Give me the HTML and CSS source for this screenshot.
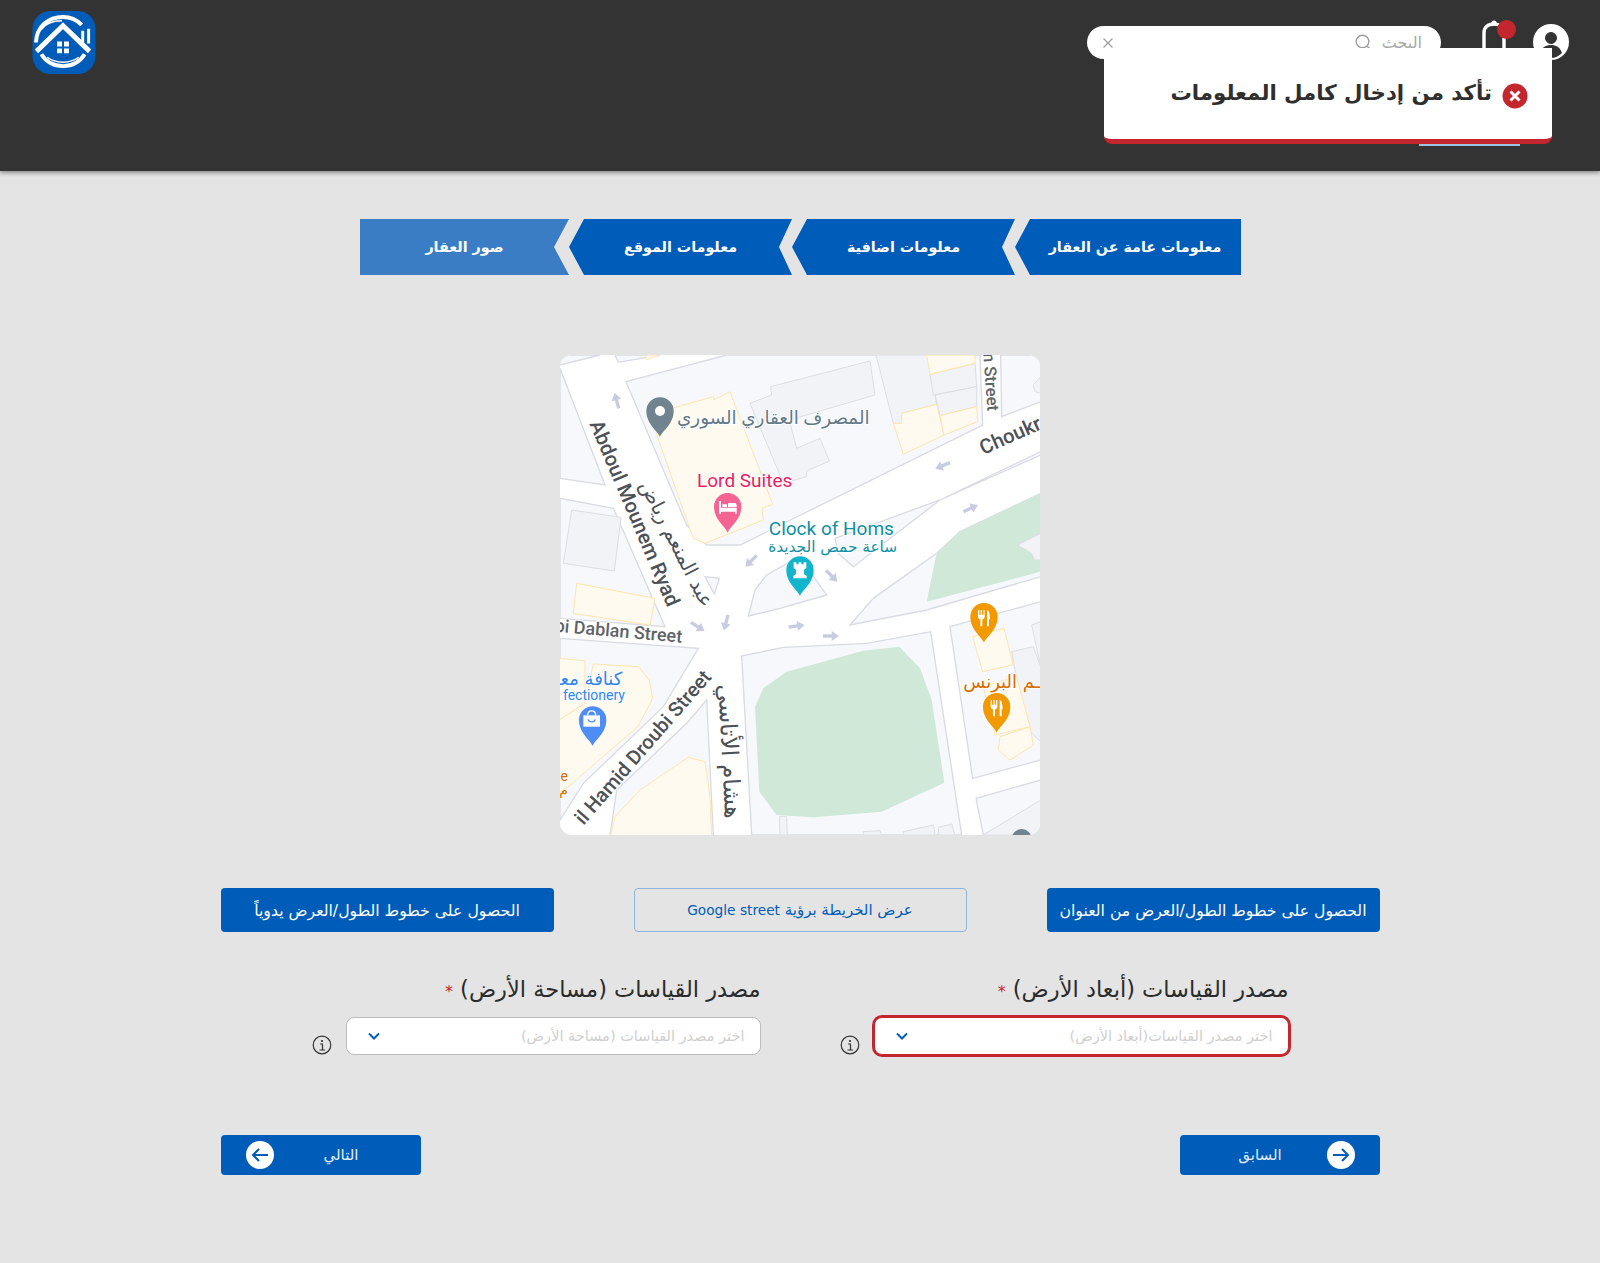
FILE: index.html
```html
<!DOCTYPE html>
<html lang="ar" dir="rtl">
<head>
  <meta charset="UTF-8">
  <meta name="viewport" content="width=device-width, initial-scale=1.0">
  <title>معلومات الموقع</title>
  <link rel="stylesheet" href="styles.css">
</head>
<body>
  <header class="top-bar">
    <div class="top-right">
      <div class="top-row">
        <svg class="user-icon" viewBox="0 0 36 36">
          <circle cx="18" cy="18" r="18" fill="#fff"/>
          <circle cx="18" cy="14" r="5.5" fill="#333" stroke="#333" stroke-width="1"/>
          <path d="M7 29c2-6 6-8 11-8s9 2 11 8c-3 3-7 5-11 5s-8-2-11-5z" fill="#333"/>
        </svg>
        <div class="bell">
          <svg viewBox="0 0 24 30" width="24" height="30">
            <path d="M2 30V13C2 7 6 4 12 4s10 3 10 9v17" fill="none" stroke="#fff" stroke-width="3.4"/>
            <circle cx="12" cy="3" r="2.6" fill="#fff"/>
          </svg>
          <span class="bell-dot"></span>
        </div>
        <div class="search-box">
          <span class="search-text">البحث</span>
          <svg class="search-icon" viewBox="0 0 18 18" width="18" height="18">
            <circle cx="8.5" cy="7.5" r="6.3" fill="none" stroke="#9d9d9d" stroke-width="1.4"/>
            <path d="M13 12l3 3" stroke="#9d9d9d" stroke-width="1.4"/>
          </svg>
          <svg class="search-clear" viewBox="0 0 12 12" width="12" height="12">
            <path d="M1.5 1.5l9 9M10.5 1.5l-9 9" stroke="#9d9d9d" stroke-width="1.2"/>
          </svg>
        </div>
      </div>
      <div class="nav-line"></div>
    </div>
    <svg class="logo" viewBox="0 0 64 64">
      <rect width="64" height="64" rx="18" fill="#005cb9"/>
      <g fill="none" stroke="#fff">
        <path d="M3.5 32C4 16 16 6 31 6c8 0 14 3 19 8" stroke-width="4"/>
        <path d="M9 44c5 8 13 12 22 12s17-4 22-12" stroke-width="4"/>
        <path d="M15 47c4 3 10 5 16 5s12-2 16-5" stroke-width="1.5"/>
        <path d="M9 19C13 13 21 10 30 10" stroke-width="1.5"/>
        <path d="M4 41L31 15l27 26" stroke-width="5"/>
        <path d="M51 20v12M57 18v15" stroke-width="3"/>
      </g>
      <path d="M25 31h5v5h-5zM32 31h5v5h-5zM25 38h5v5h-5zM32 38h5v5h-5z" fill="#fff"/>
    </svg>
  </header>

  <div class="toast">
    <svg class="toast-icon" viewBox="0 0 26 26" width="26" height="26">
      <circle cx="13" cy="13" r="12.5" fill="#c4262e"/>
      <path d="M8.5 8.5l9 9M17.5 8.5l-9 9" stroke="#fff" stroke-width="3"/>
    </svg>
    <span>تأكد من إدخال كامل المعلومات</span>
  </div>

  <main class="content">
    <div class="steps">
      <div class="step step-first">معلومات عامة عن العقار</div>
      <div class="step">معلومات اضافية</div>
      <div class="step">معلومات الموقع</div>
      <div class="step step-last">صور العقار</div>
    </div>

    <div class="map-box">
      <svg class="map" viewBox="30 30 1440 1440" width="480" height="480">
        <defs>
          <path id="arrow" d="M-24-5H2V-15L24 0 2 15V5H-24z" fill="#c9cce0"/>
          <path id="pin" d="M0 78C-6 60-41 40-41 0A41 41 0 0 1 41 0C41 40 6 60 0 78z"/>
          <path id="cutlery" d="M1285 795h4v14h4v-14h4v14h4v-14h4v20c0 5-4 8-7 8v21h-6v-21c-3 0-7-3-7-8zM1312 795c7 2 9 14 9 28h-3v21h-6z" fill="#fff"/>
        </defs>
        <rect x="30" y="30" width="1440" height="1440" fill="#fff"/>

        <!-- blocks -->
        <g class="block">
          <polygon points="228,110 530,30 1290,30 1298,240 570,600 470,600 410,540"/>
          <polygon points="30,30 30,60 150,30"/>
          <polygon points="195,30 205,52 330,30"/>
          <polygon points="1352,30 1355,215 1472,170 1472,30"/>
          <polygon points="30,70 165,420 30,400"/>
          <polygon points="30,460 190,490 345,845 30,820"/>
          <polygon points="465,695 508,700 493,747"/>
          <polygon points="595,813 615,735 650,690 720,650 780,680 830,750 690,790"/>
          <polygon points="910,665 865,625 855,580 1170,465 1420,345 1472,320 1472,330 1170,465"/>
          <polygon points="900,840 970,760 1160,625 1230,560 1472,445 1472,695 1130,795"/>
          <polygon points="30,880 445,910 340,1085 100,1315 30,1425"/>
          <polygon points="470,1065 490,1470 180,1470 200,1335 410,1135"/>
          <polygon points="575,933 700,907 950,895 1142,860 1235,1470 605,1470"/>
          <polygon points="1200,845 1472,770 1472,1245 1268,1300"/>
          <polygon points="1278,1360 1472,1305 1472,1470 1300,1470"/>
        </g>

        <!-- buildings -->
        <g class="building">
          <polygon points="600,175 665,150 662,125 960,48 975,150 718,225 740,310 810,280 838,348 770,378 770,395 700,415"/>
          <polygon points="978,30 1030,235 1055,235 1055,205 1160,178 1135,30"/>
          <polygon points="1140,88 1275,55 1280,125 1150,150"/>
          <polygon points="1155,150 1280,125 1280,185 1170,212"/>
          <polygon points="65,495 213,517 193,678 40,655"/>
          <polygon points="1450,120 1472,95 1472,145 1455,140"/>
          <polygon points="688,1415 710,1415 712,1470 690,1470"/>
          <polygon points="940,1460 990,1457 995,1470 940,1470"/>
          <polygon points="1060,1470 1060,1460 1150,1440 1155,1470"/>
          <polygon points="1165,1447 1205,1437 1215,1470 1165,1470"/>
          <polygon points="1385,920 1450,905 1472,965 1472,1190 1440,1160 1400,1000"/>
          <polygon points="1445,840 1472,830 1472,955 1470,955"/>
          <polygon points="1300,1470 1472,1365 1472,1470"/>
        </g>

        <!-- yellow lots -->
        <g class="lot">
          <polygon points="320,270 330,200 490,155 492,165 540,140 668,478 636,490 640,525 465,595 430,580"/>
          <polygon points="1055,205 1160,178 1182,270 1060,328 1030,235 1055,235"/>
          <polygon points="1130,30 1275,30 1275,55 1140,88"/>
          <polygon points="1170,212 1280,185 1283,230 1182,270"/>
          <polygon points="285,30 325,30 290,45"/>
          <polygon points="80,715 315,760 300,840 70,805"/>
          <polygon points="20,940 105,947 105,1075 20,1130"/>
          <polygon points="130,957 265,965 298,1005 308,1060 265,1143 55,1325 20,1345 20,1130 105,1075"/>
          <polygon points="180,1480 195,1415 270,1335 415,1237 465,1250 480,1355 485,1480"/>
          <polygon points="1268,875 1362,850 1390,960 1298,980"/>
          <polygon points="1300,1025 1400,995 1440,1145 1335,1170"/>
          <polygon points="1350,1175 1440,1145 1450,1200 1380,1245 1345,1215"/>
        </g>

        <!-- park -->
        <g class="park">
          <polygon points="615,1085 640,1030 710,980 940,917 1048,905 1110,970 1145,1065 1183,1313 995,1400 790,1417 680,1410 628,1340"/>
          <polygon points="1130,770 1160,625 1230,560 1472,445 1472,680"/>
        </g>
        <polygon class="building-flat" points="1402,600 1472,565 1472,645 1452,645 1445,625"/>

        <use href="#arrow" transform="translate(200,167) rotate(-105)"/>
        <use href="#arrow" transform="translate(1178,362) rotate(158)"/>
        <use href="#arrow" transform="translate(1262,490) rotate(-25)"/>
        <use href="#arrow" transform="translate(603,648) rotate(135)"/>
        <use href="#arrow" transform="translate(845,693) rotate(45)"/>
        <use href="#arrow" transform="translate(443,845) rotate(32)"/>
        <use href="#arrow" transform="translate(528,833) rotate(105)"/>
        <use href="#arrow" transform="translate(740,843) rotate(-8)"/>
        <use href="#arrow" transform="translate(843,873) rotate(0)"/>

        <!-- street names -->
        <text class="street" transform="translate(118,236) rotate(67)">Abdoul Mounem Ryad</text>
        <text class="street-ar" text-anchor="middle" transform="translate(362,605) rotate(63)">عبد المنعم رياض</text>
        <text class="street" transform="translate(1300,330) rotate(-24)">Choukr</text>
        <text class="street-small" transform="translate(1300,25) rotate(86)">n Street</text>
        <text class="street-thin" text-anchor="end" transform="translate(395,893) rotate(5)">bi Dablan Street</text>
        <text class="street-ar street-ar-big" text-anchor="middle" transform="translate(515,1220) rotate(87)">هشام الأتاسي</text>
        <text class="street street-big" text-anchor="end" transform="translate(487,998) rotate(-49)">il Hamid Droubi Street</text>

        <!-- places -->
        <use href="#pin" transform="translate(330,198)" fill="#70838f"/>
        <circle cx="330" cy="198" r="15" fill="#fff"/>
        <text class="place place-bank" x="670" y="236" text-anchor="middle">المصرف العقاري السوري</text>

        <text class="place place-hotel" x="584" y="425" text-anchor="middle">Lord Suites</text>
        <use href="#pin" transform="translate(533,485)" fill="#f46391"/>
        <path d="M507 468h6v20h47v18h-5v-6h-42v6h-6zM517 478h14v8h-14zM534 474h20c4 0 6 3 6 7v5h-26z" fill="#fff"/>

        <text class="place place-clock" x="844" y="570" text-anchor="middle">Clock of Homs</text>
        <text class="place-ar-small place-clock" x="848" y="620" text-anchor="middle">ساعة حمص الجديدة</text>
        <use href="#pin" transform="translate(750,675)" fill="#12b5cb"/>
        <path d="M731 653h8v6h7v-6h8v6h7v-6h8v17l-7 5v13l8 6v7h-40v-7l8-6v-13l-7-5z" fill="#fff" transform="translate(0,-1)"/>

        <use href="#pin" transform="translate(1302,815)" fill="#f29900"/>
        <use href="#cutlery" transform="translate(-1,0)"/>
        <use href="#pin" transform="translate(1340,1085)" fill="#f29900"/>
        <use href="#cutlery" transform="translate(37,270)"/>
        <text class="place-ar place-food" x="1470" y="1030" text-anchor="end">ـم البرنس</text>

        <use href="#pin" transform="translate(128,1125)" fill="#4e8df5"/>
        <path d="M100 1111h50v34h-50z" fill="#fff"/>
        <path d="M113 1111c0-18 24-18 24 0" fill="none" stroke="#fff" stroke-width="4"/>
        <path d="M114 1123c3 10 19 10 22 0" fill="none" stroke="#4e8df5" stroke-width="4"/>
        <text class="place-ar place-shop" x="217" y="1020" text-anchor="end">كنافة معـ</text>
        <text class="place-small place-shop" x="225" y="1066" text-anchor="end">fectionery</text>
        <text class="place-small place-food" x="54" y="1308" text-anchor="end">e</text>
        <text class="place-small place-food" x="54" y="1350" text-anchor="end">م</text>
        <circle cx="1415" cy="1482" r="30" fill="#70838f"/>
      </svg>
    </div>

    <div class="map-actions">
      <button class="btn btn-solid">الحصول على خطوط الطول/العرض من العنوان</button>
      <button class="btn btn-outline">عرض الخريطة برؤية <span class="btn-latin">Google street</span></button>
      <button class="btn btn-solid">الحصول على خطوط الطول/العرض يدوياً</button>
    </div>

    <div class="fields">
      <div class="field">
        <label class="field-label">مصدر القياسات (أبعاد الأرض) <span class="req">*</span></label>
        <div class="field-row">
          <div class="select select-error">
            <span>اختر مصدر القياسات(أبعاد الأرض)</span>
            <svg viewBox="0 0 12 8" width="12" height="8"><path d="M1 1.5l5 5 5-5" fill="none" stroke="#005cb9" stroke-width="2"/></svg>
          </div>
          <svg class="info" viewBox="0 0 20 20" width="20" height="20">
            <circle cx="10" cy="10" r="8.8" fill="none" stroke="#333" stroke-width="1.2"/>
            <circle cx="10" cy="6" r="1.1" fill="#333"/>
            <path d="M8 9h2.5v6M7.5 15h5.5" fill="none" stroke="#333" stroke-width="1.2"/>
          </svg>
        </div>
      </div>
      <div class="field">
        <label class="field-label">مصدر القياسات (مساحة الأرض) <span class="req">*</span></label>
        <div class="field-row">
          <div class="select">
            <span>اختر مصدر القياسات (مساحة الأرض)</span>
            <svg viewBox="0 0 12 8" width="12" height="8"><path d="M1 1.5l5 5 5-5" fill="none" stroke="#005cb9" stroke-width="2"/></svg>
          </div>
          <svg class="info" viewBox="0 0 20 20" width="20" height="20">
            <circle cx="10" cy="10" r="8.8" fill="none" stroke="#333" stroke-width="1.2"/>
            <circle cx="10" cy="6" r="1.1" fill="#333"/>
            <path d="M8 9h2.5v6M7.5 15h5.5" fill="none" stroke="#333" stroke-width="1.2"/>
          </svg>
        </div>
      </div>
    </div>

    <div class="pager">
      <button class="pager-btn pager-prev">
        <svg viewBox="0 0 28 28" width="28" height="28">
          <circle cx="14" cy="14" r="14" fill="#fff"/>
          <path d="M6 14h15M15 8l6 6-6 6" fill="none" stroke="#005cb9" stroke-width="2"/>
        </svg>
        <span>السابق</span>
      </button>
      <button class="pager-btn pager-next">
        <span>التالي</span>
        <svg viewBox="0 0 28 28" width="28" height="28">
          <circle cx="14" cy="14" r="14" fill="#fff"/>
          <path d="M22 14H7M13 8l-6 6 6 6" fill="none" stroke="#005cb9" stroke-width="2"/>
        </svg>
      </button>
    </div>
  </main>
</body>
</html>
```

FILE: styles.css
```css
* {
  box-sizing: border-box;
}
body {
  margin: 0;
  min-height: 1263px;
  background-color: #e4e4e4;
  font-family: "DejaVu Sans", sans-serif;
  color: #2b2b2b;
}

/* top bar */
.top-bar {
  display: flex;
  justify-content: space-between;
  align-items: flex-start;
  height: 171px;
  background-color: #333;
  box-shadow: 0 2px 4px rgba(0, 0, 0, 0.4);
}
.top-right {
  display: flex;
  flex-direction: column;
  padding-right: 31px;
}
.top-row {
  display: flex;
  align-items: flex-start;
}
.user-icon {
  width: 36px;
  height: 36px;
  margin-top: 24px;
}
.bell {
  position: relative;
  width: 24px;
  height: 30px;
  margin: 20px 27px 0 0;
}
.bell-dot {
  position: absolute;
  top: 0;
  right: -10px;
  width: 19px;
  height: 19px;
  border-radius: 50%;
  background-color: #c4262e;
}
.search-box {
  display: flex;
  align-items: center;
  width: 354px;
  height: 33px;
  margin: 26px 41px 0 0;
  padding: 0 19px 0 15px;
  border-radius: 17px;
  background-color: #fff;
  font-size: 16px;
  color: #a8a8a8;
}
.search-icon {
  margin-right: 10px;
}
.search-clear {
  margin-right: auto;
}
.nav-line {
  width: 101px;
  height: 2px;
  margin: 84px 49px 0 0;
  background-color: #9cc3e6;
}
.logo {
  width: 64px;
  height: 63px;
  margin: 11px 0 0 32px;
}

/* error message */
.toast {
  position: absolute;
  top: 48px;
  left: 1104px;
  display: flex;
  align-items: flex-start;
  gap: 10px;
  width: 448px;
  height: 96px;
  padding: 35px 24px 0 0;
  border-bottom: 5px solid #c4262e;
  border-radius: 0 0 8px 8px;
  background-color: #fff;
  font-size: 21.3px;
  font-weight: 700;
  color: #2f2f2f;
}
.toast span {
  margin-top: -3px;
}

/* wizard steps */
.content {
  display: flex;
  flex-direction: column;
  align-items: center;
  padding-top: 48px;
}
.steps {
  display: flex;
  width: 882px;
  padding-left: 1px;
}
.step {
  display: flex;
  align-items: center;
  justify-content: center;
  width: 223px;
  height: 56px;
  background-color: #005cb9;
  color: #fff;
  font-size: 14.3px;
  font-weight: 700;
  clip-path: polygon(15px 0, 100% 0, calc(100% - 13px) 50%, 100% 100%, 15px 100%, 0 50%);
}
.step-first {
  width: 226px;
  padding-left: 14px;
  clip-path: polygon(15px 0, 100% 0, 100% 100%, 15px 100%, 0 50%);
}
.step-last {
  width: 209px;
  background-color: #3a7dc4;
  clip-path: polygon(0 0, 100% 0, calc(100% - 15px) 50%, 100% 100%, 0 100%);
}

/* map */
.map-box {
  width: 480px;
  height: 480px;
  margin-top: 80px;
  border-radius: 12px;
  overflow: hidden;
}
.map {
  display: block;
  direction: ltr;
}
.block polygon {
  fill: #f6f8fb;
  stroke: #d9dbe3;
  stroke-width: 4;
}
.building polygon,
.building-flat {
  fill: #f1f3f6;
  stroke: #dcdee4;
  stroke-width: 3;
}
.lot polygon {
  fill: #fffaf0;
  stroke: #fde5ae;
  stroke-width: 3;
}
.park polygon {
  fill: #cfe8d8;
}
.map text {
  paint-order: stroke;
  stroke: #fff;
  stroke-width: 6px;
  stroke-linejoin: round;
}
.street {
  font-family: Roboto, sans-serif;
  font-size: 61px;
  font-weight: 500;
  fill: #4d5156;
}
.street-big {
  font-size: 60px;
}
.street-thin {
  font-family: Roboto, sans-serif;
  font-size: 54px;
  font-weight: 500;
  fill: #5f6368;
}
.street-small {
  font-family: Roboto, sans-serif;
  font-size: 50px;
  font-weight: 500;
  fill: #5f6368;
}
.street-ar {
  font-family: "DejaVu Sans", sans-serif;
  font-size: 60px;
  fill: #4d5156;
}
.street-ar-big {
  font-size: 70px;
}
.place {
  font-family: Roboto, "DejaVu Sans", sans-serif;
  font-size: 57px;
}
.place-ar {
  font-family: "DejaVu Sans", sans-serif;
  font-size: 54px;
}
.place-ar-small {
  font-family: "DejaVu Sans", sans-serif;
  font-size: 46px;
}
.place-small {
  font-family: Roboto, "DejaVu Sans", sans-serif;
  font-size: 42px;
}
.place-bank {
  font-size: 55px;
  fill: #62798a;
}
.place-hotel {
  fill: #ea1e63;
}
.place-clock {
  fill: #0e8fa3;
}
.place-food {
  fill: #d96c00;
}
.place-shop {
  fill: #2f86f0;
}

/* buttons under the map */
.map-actions {
  display: flex;
  justify-content: space-between;
  width: 1159px;
  margin-top: 53px;
}
.btn {
  width: 333px;
  height: 44px;
  border-radius: 4px;
  font-family: inherit;
  font-size: 15.7px;
}
.btn-solid {
  border: none;
  background-color: #005cb9;
  color: #fff;
}
.btn-outline {
  border: 1px solid #8fb4dc;
  background-color: transparent;
  color: #005cb9;
  font-size: 15px;
}
.btn-latin {
  font-size: 13.7px;
}

/* measure fields */
.fields {
  display: flex;
  gap: 79px;
  margin-top: 44px;
}
.field {
  width: 449px;
}
.field-label {
  display: block;
  height: 30px;
  margin-bottom: 11px;
  line-height: 26px;
  font-size: 22.5px;
}
.req {
  font-size: 16px;
  color: #c4262e;
}
.field-row {
  display: flex;
  justify-content: space-between;
  align-items: flex-end;
}
.select {
  display: flex;
  justify-content: space-between;
  align-items: center;
  width: 415px;
  height: 38px;
  padding: 0 15px 0 21px;
  border: 1px solid #bdbdbd;
  border-radius: 8px;
  background-color: #fff;
  font-size: 14.5px;
  color: #cfcfcf;
}
.select-error {
  border-color: #c4262e;
  box-shadow: 0 0 0 2px #c4262e;
}

/* prev and next */
.pager {
  display: flex;
  justify-content: space-between;
  width: 1159px;
  margin-top: 80px;
}
.pager-btn {
  display: flex;
  align-items: center;
  width: 200px;
  height: 40px;
  padding: 0 25px 0 14px;
  border: none;
  border-radius: 4px;
  background-color: #005cb9;
  font-family: inherit;
  font-size: 15px;
  color: #e3edf7;
}
.pager-btn span {
  flex: 1;
  text-align: center;
}
.pager-next {
  padding: 0 12px 0 25px;
}
```
